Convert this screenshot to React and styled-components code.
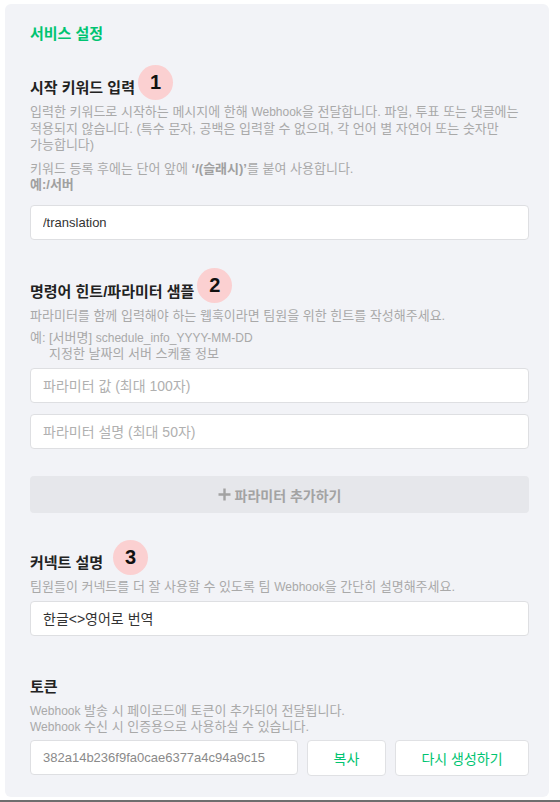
import React from "react";
import styled, { createGlobalStyle } from "styled-components";

const Global = createGlobalStyle`
  html, body { margin: 0; padding: 0; background: #ffffff; }
  body { font-family: "Liberation Sans", "Noto Sans CJK KR", Arial, sans-serif; }
  * { box-sizing: border-box; }
`;

const Page = styled.div`
  width: 560px;
  height: 802px;
  padding: 4px 11px 0 5px;
  border-bottom: 2px solid #6e6e6e;
  background: #ffffff;
`;

const Panel = styled.section`
  height: 793px;
  background: #f2f3f7;
  border-radius: 6px;
  padding: 20px 20px 0 25px;
  display: flex;
  flex-direction: column;
`;

const Title = styled.h2`
  margin: 0;
  font-size: 15px;
  line-height: 20px;
  font-weight: 700;
  color: #00c471;
`;

const Section = styled.div`
  display: flex;
  flex-direction: column;
  margin-top: ${(p) => p.$top}px;
`;

const HeadRow = styled.div`
  display: flex;
  align-items: center;
  height: 20px;
`;

const Heading = styled.h3`
  margin: 0;
  font-size: 15px;
  line-height: 20px;
  font-weight: 700;
  color: #222222;
`;

const Badge = styled.span`
  width: 35px;
  height: 35px;
  flex: none;
  border-radius: 50%;
  background: #fbd0d1;
  color: #111111;
  display: flex;
  align-items: center;
  justify-content: center;
  font-family: "Liberation Sans", Arial, sans-serif;
  font-size: 20px;
  font-weight: 700;
  margin-left: ${(p) => p.$gap || 3}px;
  transform: translateY(-6px);
`;

const Desc = styled.p`
  margin: ${(p) => p.$top ?? 4}px 0 0;
  font-size: 13px;
  line-height: 16.6px;
  color: #a9a9a9;
  word-break: keep-all;
  b { font-weight: 700; color: #a0a0a0; }
`;

const Latin = styled.span`
  font-size: 12px;
`;

const Example = styled.div`
  display: flex;
  margin-top: 5.5px;
  font-size: 13px;
  line-height: 16px;
  color: #a9a9a9;
`;

const ExampleLabel = styled.span`
  width: 19px;
  flex: none;
`;

const ExampleBody = styled.div`
  display: flex;
  flex-direction: column;
`;

const Field = styled.input`
  width: 100%;
  height: 35px;
  margin-top: ${(p) => p.$top}px;
  padding: 0 12px;
  border: 1px solid #dedfe2;
  border-radius: 4px;
  background: #ffffff;
  font-family: "Liberation Sans", "Noto Sans CJK KR", Arial, sans-serif;
  font-size: ${(p) => p.$size || 14}px;
  color: ${(p) => (p.$muted ? "#8a8a8a" : "#333333")};
  outline: none;
  &::placeholder { color: #b0b0b0; }
`;

const AddButton = styled.button`
  margin-top: 27px;
  height: 37px;
  width: 100%;
  border: none;
  border-radius: 4px;
  background: #e6e7eb;
  color: #a3a3a3;
  font-family: "Liberation Sans", "Noto Sans CJK KR", Arial, sans-serif;
  font-size: 14px;
  font-weight: 700;
  display: flex;
  align-items: center;
  justify-content: center;
  gap: 4px;
`;

const TokenRow = styled.div`
  display: grid;
  grid-template-columns: 268px 79px 1fr;
  column-gap: 9px;
  margin-top: 4px;
  align-items: stretch;
`;

const GhostButton = styled.button`
  height: 36px;
  border: 1px solid #e0e1e4;
  border-radius: 4px;
  background: #ffffff;
  color: #00c471;
  font-family: "Liberation Sans", "Noto Sans CJK KR", Arial, sans-serif;
  font-size: 14px;
`;

const PlusIcon = () => (
  <svg width="13" height="13" viewBox="0 0 13 13">
    <path d="M6.5 0.5v12M0.5 6.5h12" stroke="#a3a3a3" strokeWidth="2.4" />
  </svg>
);

export default function App() {
  return (
    <>
      <Global />
      <Page>
        <Panel>
          <Title>서비스 설정</Title>

          <Section $top={34}>
            <HeadRow>
              <Heading>시작 키워드 입력</Heading>
              <Badge>1</Badge>
            </HeadRow>
            <Desc $top={6}>
              입력한 키워드로 시작하는 메시지에 한해 <Latin>Webhook</Latin>을 전달합니다. 파일, 투표 또는 댓글에는 적용되지 않습니다. (특수 문자, 공백은 입력할 수 없으며, 각 언어 별 자연어 또는 숫자만 가능합니다)
            </Desc>
            <Desc $top={7}>
              키워드 등록 후에는 단어 앞에 <b>‘/(슬래시)’</b>를 붙여 사용합니다.
              <br />
              <b>예:/서버</b>
            </Desc>
            <Field $top={11} $size={13} defaultValue="/translation" />
          </Section>

          <Section $top={42}>
            <HeadRow>
              <Heading>명령어 힌트/파라미터 샘플</Heading>
              <Badge>2</Badge>
            </HeadRow>
            <Desc $top={6}>파라미터를 함께 입력해야 하는 웹훅이라면 팀원을 위한 힌트를 작성해주세요.</Desc>
            <Example>
              <ExampleLabel>예:</ExampleLabel>
              <ExampleBody>
                <span>[서버명] <Latin>schedule_info_YYYY-MM-DD</Latin></span>
                <span>지정한 날짜의 서버 스케쥴 정보</span>
              </ExampleBody>
            </Example>
            <Field $top={6} placeholder="파라미터 값 (최대 100자)" />
            <Field $top={11} placeholder="파라미터 설명 (최대 50자)" />
            <AddButton type="button">
              <PlusIcon />
              파라미터 추가하기
            </AddButton>
          </Section>

          <Section $top={40}>
            <HeadRow>
              <Heading>커넥트 설명</Heading>
              <Badge $gap={10}>3</Badge>
            </HeadRow>
            <Desc $top={6}>팀원들이 커넥트를 더 잘 사용할 수 있도록 팀 <Latin>Webhook</Latin>을 간단히 설명해주세요.</Desc>
            <Field $top={5} defaultValue="한글<>영어로 번역" />
          </Section>

          <Section $top={41}>
            <HeadRow>
              <Heading>토큰</Heading>
            </HeadRow>
            <Desc $top={6}>
              <Latin>Webhook</Latin> 발송 시 페이로드에 토큰이 추가되어 전달됩니다.
              <br />
              <Latin>Webhook</Latin> 수신 시 인증용으로 사용하실 수 있습니다.
            </Desc>
            <TokenRow>
              <Field $top={0} $size={13} $muted readOnly value="382a14b236f9fa0cae6377a4c94a9c15" />
              <GhostButton type="button">복사</GhostButton>
              <GhostButton type="button">다시 생성하기</GhostButton>
            </TokenRow>
          </Section>
        </Panel>
      </Page>
    </>
  );
}
